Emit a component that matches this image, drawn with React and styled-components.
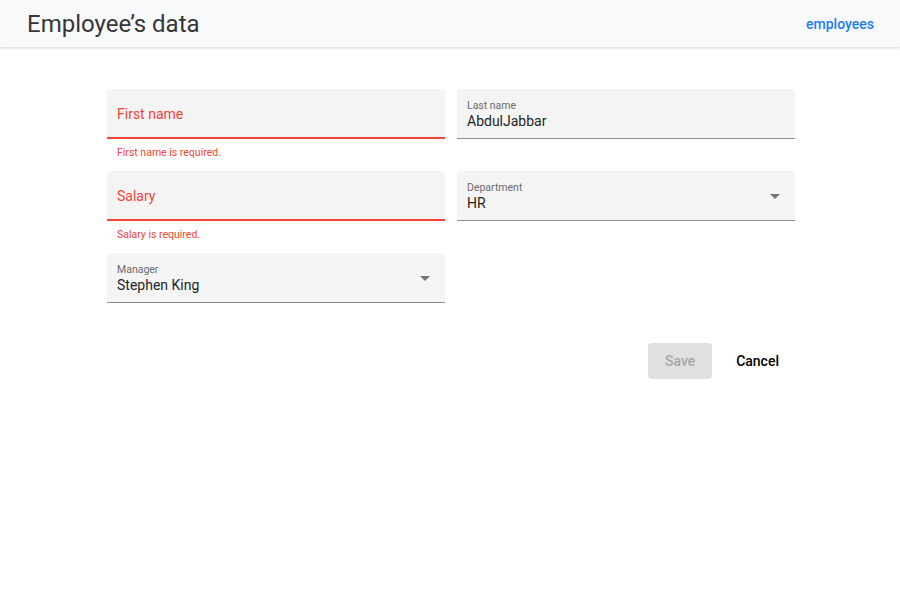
import styled, { createGlobalStyle } from "styled-components"

const GlobalStyle = createGlobalStyle`
  body {
    margin: 0;
    background: #fff;
    font-family: Roboto, "Liberation Sans", sans-serif;
  }
`

const Header = styled.header`
  height: 47px;
  background-color: #f8f9fa;
  box-shadow: 0 1px 3px rgba(0, 0, 0, 0.18);
  display: flex;
  align-items: center;
  justify-content: space-between;
  padding: 0 26px 0 27px;
`
const Title = styled.h1`
  margin: 0;
  font-size: 24px;
  font-weight: 400;
  color: #363636;
`
const NavLink = styled.a`
  font-size: 14px;
  font-weight: 500;
  color: #1a7cf2;
  text-decoration: none;
  cursor: pointer;
`
const Form = styled.form`
  width: 688px;
  margin: 42px auto 0;
  padding-left: 2px;
`
const Grid = styled.div`
  display: grid;
  grid-template-columns: 338px 338px;
  grid-auto-rows: 82px;
  column-gap: 12px;
`
const FieldWrap = styled.div`
  display: flex;
  flex-direction: column;
`
const Box = styled.div`
  position: relative;
  height: ${(p) => (p.$error ? 48 : 49)}px;
  background-color: #f4f4f4;
  border-radius: 4px 4px 0 0;
  border-bottom: ${(p) => (p.$error ? "2px solid #f44336" : "1px solid #8e8e8e")};
  padding: 0 15px 0 10px;
  display: flex;
  align-items: center;
  box-sizing: content-box;
`
const Inner = styled.div`
  flex: 1;
  display: flex;
  flex-direction: column;
`
const FloatLabel = styled.span`
  font-size: 10.5px;
  color: #6b6b6b;
  line-height: 13px;
  margin-top: 1px;
`
const Value = styled.span`
  font-size: 14px;
  color: #1f1f1f;
  line-height: 18px;
  margin-top: 0;
`
const Placeholder = styled.span`
  font-size: 14px;
  color: #f44336;
  margin-top: 1px;
`
const Arrow = styled.span`
  width: 0;
  height: 0;
  border-left: 5px solid transparent;
  border-right: 5px solid transparent;
  border-top: 5px solid #757575;
  margin-top: 2px;
`
const ErrorText = styled.div`
  font-size: 10.5px;
  color: #f44336;
  padding-left: 10px;
  margin-top: 7px;
`
const Actions = styled.div`
  display: flex;
  justify-content: flex-end;
  gap: 8px;
  margin-top: 8px;
`
const Button = styled.button`
  height: 36px;
  border: none;
  border-radius: 4px;
  padding: 0 16px;
  font-family: inherit;
  font-size: 14px;
  font-weight: 500;
  background-color: ${(p) => (p.$flat ? "transparent" : "#e0e0e0")};
  color: ${(p) => (p.disabled ? "#a8a8a8" : "#000")};
  min-width: 64px;
`

function Field({ label, value, error, select }) {
  return (
    <FieldWrap>
      <Box $error={!!error}>
        <Inner>
          {value ? (
            <>
              <FloatLabel>{label}</FloatLabel>
              <Value>{value}</Value>
            </>
          ) : (
            <Placeholder>{label}</Placeholder>
          )}
        </Inner>
        {select && <Arrow />}
      </Box>
      {error && <ErrorText>{error}</ErrorText>}
    </FieldWrap>
  )
}

export default function App() {
  return (
    <>
      <GlobalStyle />
      <Header>
        <Title>Employee’s data</Title>
        <NavLink>employees</NavLink>
      </Header>
      <Form onSubmit={(e) => e.preventDefault()}>
        <Grid>
          <Field label="First name" error="First name is required." />
          <Field label="Last name" value="AbdulJabbar" />
          <Field label="Salary" error="Salary is required." />
          <Field label="Department" value="HR" select />
          <Field label="Manager" value="Stephen King" select />
        </Grid>
        <Actions>
          <Button disabled>Save</Button>
          <Button type="button" $flat>Cancel</Button>
        </Actions>
      </Form>
    </>
  )
}
